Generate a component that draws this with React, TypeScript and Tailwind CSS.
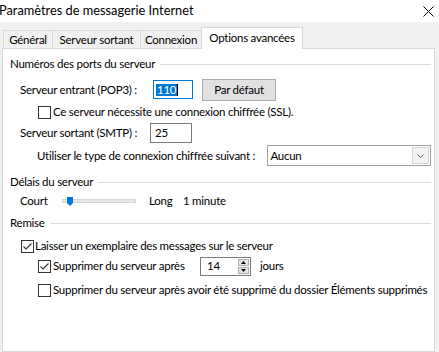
import type { ReactNode } from 'react';

function CheckBox({ checked = false }: { checked?: boolean }) {
  return (
    <div className="flex h-[13px] w-[13px] shrink-0 items-center justify-center border border-[#333333] bg-white">
      {checked && (
        <svg width="11" height="11" viewBox="0 0 11 11">
          <polyline points="1.5,5.5 4,8 9.5,2.5" fill="none" stroke="#333333" strokeWidth="1.1" />
        </svg>
      )}
    </div>
  );
}

function GroupHeader({ title }: { title: string }) {
  return (
    <div className="flex h-[16px] items-center">
      <span className="whitespace-nowrap">{title}</span>
      <div className="ml-[5px] h-px flex-1 bg-[#dcdcdc]" />
    </div>
  );
}

function Row({ className, children }: { className: string; children: ReactNode }) {
  return <div className={`flex items-center whitespace-nowrap ${className}`}>{children}</div>;
}

export default function App() {
  return (
    <div className="flex h-[352px] w-[439px] flex-col overflow-hidden bg-[#f0f0f0] font-[Lato,sans-serif] text-[11.5px] tracking-[-0.25px] text-black">
      {/* title bar */}
      <div className="flex h-[22px] shrink-0 items-center justify-between bg-white">
        <span className="-ml-[1px] text-[12.8px] tracking-normal">Paramètres de messagerie Internet</span>
        <svg width="11" height="11" viewBox="0 0 11 11" className="mr-[5px]">
          <path d="M0.5 0.5 L10.5 10.5 M10.5 0.5 L0.5 10.5" stroke="#000" strokeWidth="1" />
        </svg>
      </div>

      {/* tabs */}
      <div className="flex h-[26px] shrink-0 items-end pl-[3px]">
        <div className="flex h-[18px] w-[49px] items-center justify-center border-l border-t border-[#d9d9d9]">Général</div>
        <div className="flex h-[18px] w-[88px] items-center justify-center border-l border-t border-[#d9d9d9]">Serveur sortant</div>
        <div className="flex h-[18px] w-[61px] items-center justify-center border-l border-t border-[#d9d9d9]">Connexion</div>
        <div className="relative z-10 -mb-px flex h-[22px] w-[102px] items-center justify-center border-x border-t border-[#d9d9d9] bg-white pb-[2px]">
          Options avancées
        </div>
      </div>

      {/* panel */}
      <div className="ml-[2px] flex w-[433px] flex-1 flex-col border border-[#d9d9d9] bg-white pl-[7px] pr-[3px]">
        <div className="mt-[7px]">
          <GroupHeader title="Numéros des ports du serveur" />
        </div>

        <Row className="mt-[7px] h-[21px] pl-[10px]">
          <span className="w-[133px]">Serveur entrant (POP3) :</span>
          <div className="flex h-[19px] w-[40px] items-center border border-[#0078d7] pl-[2px]">
            <span className="bg-[#0078d7] px-px leading-[12px] text-white">110</span>
            <span className="h-[12px] w-px bg-black" />
          </div>
          <div className="ml-[9px] flex h-[22px] w-[74px] items-center justify-center border border-[#adadad] bg-[#e1e1e1]">
            Par défaut
          </div>
        </Row>

        <Row className="mt-[5px] h-[14px] pl-[28px]">
          <CheckBox />
          <span className="ml-[2px]">Ce serveur nécessite une connexion chiffrée (SSL).</span>
        </Row>

        <Row className="mt-[4px] h-[20px] pl-[10px]">
          <span className="w-[130px]">Serveur sortant (SMTP) :</span>
          <div className="flex h-[20px] w-[42px] items-center border border-[#7a7a7a] pl-[4px]">25</div>
        </Row>

        <Row className="mt-[2px] h-[21px] pl-[27px]">
          <span className="w-[231px]">Utiliser le type de connexion chiffrée suivant :</span>
          <div className="flex h-[21px] w-[164px] items-center justify-between border border-[#a0a0a0] pl-[2px]">
            <span>Aucun</span>
            <div className="mr-px flex h-[17px] w-[17px] items-center justify-center border border-[#d4d4d4] bg-[#f3f3f3]">
              <svg width="7" height="4" viewBox="0 0 7 4">
                <polyline points="0.5,0.5 3.5,3.5 6.5,0.5" fill="none" stroke="#606060" strokeWidth="1" />
              </svg>
            </div>
          </div>
        </Row>

        <div className="mt-[8px]">
          <GroupHeader title="Délais du serveur" />
        </div>

        <Row className="mt-[3px] h-[16px] pl-[10px]">
          <span className="w-[42px]">Court</span>
          <div className="relative h-[4px] w-[74px] border border-[#d6d6d6] bg-[#e7e7e7]">
            <svg width="6" height="9" viewBox="0 0 6 9" className="absolute left-[4px] top-[-3px]">
              <path d="M0 0 H6 V6 L3 9 L0 6 Z" fill="#0078d7" />
            </svg>
          </div>
          <span className="ml-[13px] w-[34px]">Long</span>
          <span>1 minute</span>
        </Row>

        <div className="mt-[6px]">
          <GroupHeader title="Remise" />
        </div>

        <Row className="mt-[8px] h-[14px] pl-[11px]">
          <CheckBox checked />
          <span className="ml-[1px]">Laisser un exemplaire des messages sur le serveur</span>
        </Row>

        <Row className="mt-[3px] h-[20px] pl-[28px]">
          <CheckBox checked />
          <span className="ml-[2px] w-[147px]">Supprimer du serveur après</span>
          <div className="flex h-[19px] w-[51px] items-center justify-between border border-[#7a7a7a] pl-[6px]">
            <span>14</span>
            <div className="mr-px flex flex-col gap-px">
              <div className="flex h-[7px] w-[11px] items-center justify-center border border-[#adadad] bg-[#e5e5e5]">
                <svg width="5" height="3" viewBox="0 0 5 3"><path d="M2.5 0 L5 3 H0 Z" fill="#000" /></svg>
              </div>
              <div className="flex h-[7px] w-[11px] items-center justify-center border border-[#adadad] bg-[#e5e5e5]">
                <svg width="5" height="3" viewBox="0 0 5 3"><path d="M0 0 H5 L2.5 3 Z" fill="#000" /></svg>
              </div>
            </div>
          </div>
          <span className="ml-[9px]">jours</span>
        </Row>

        <Row className="mt-[7px] h-[14px] pl-[28px]">
          <CheckBox />
          <span className="ml-[2px]">Supprimer du serveur après avoir été supprimé du dossier Éléments supprimés</span>
        </Row>
      </div>
    </div>
  );
}
